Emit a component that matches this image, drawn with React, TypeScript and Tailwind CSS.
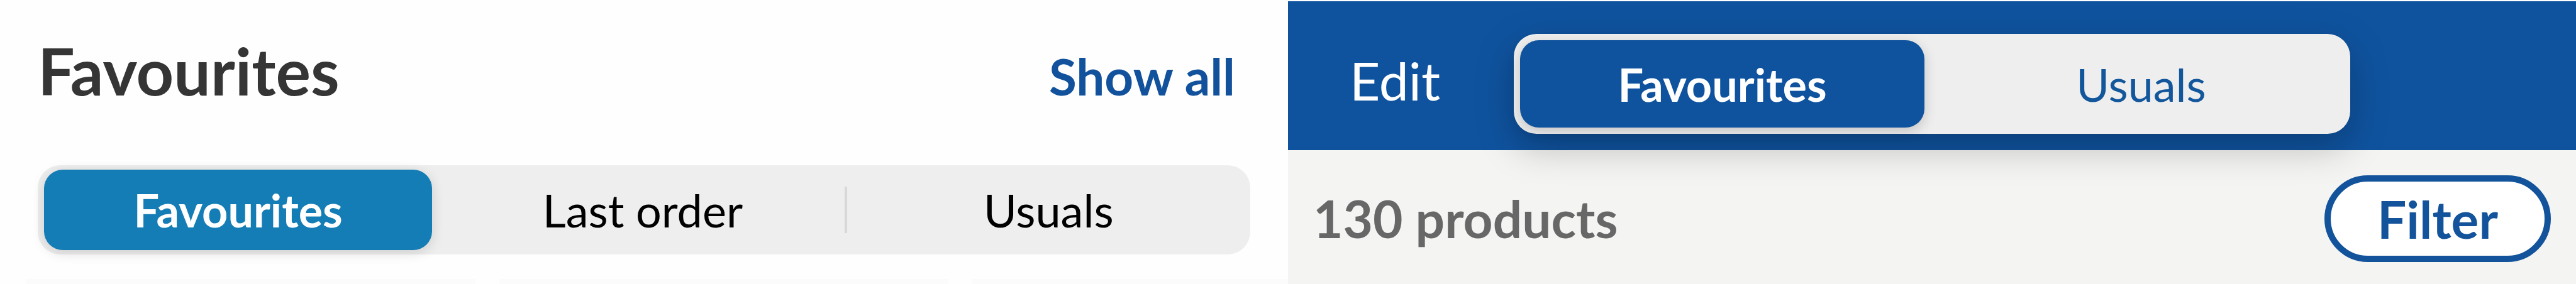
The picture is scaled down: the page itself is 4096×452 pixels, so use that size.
import type { ReactNode } from 'react';

type SegmentProps = {
  children: ReactNode;
  className: string;
  active?: boolean;
};

function Segment({ children, className, active = false }: SegmentProps) {
  return (
    <button
      type="button"
      aria-pressed={active}
      className={`min-w-0 flex-1 text-center text-[72px] leading-[88px] ${className}`}
    >
      {children}
    </button>
  );
}

function HomeFavourites() {
  return (
    <section className="flex flex-col overflow-hidden bg-[#fefefe]">
      <header className="flex items-baseline justify-between pt-[60px] pr-[84px] pl-[60px]">
        <h1 className="text-[104px] leading-[104px] font-bold text-[#343534]">Favourites</h1>
        <a href="#all" className="text-[80px] leading-[104px] font-bold text-[#12529c]">
          Show all
        </a>
      </header>

      <div
        role="group"
        aria-label="Product lists"
        className="mx-[60px] mt-[90px] grid h-[142px] grid-cols-[1fr_1fr_4px_1fr] items-stretch rounded-[36px] bg-[#eeeeee]"
      >
        <div className="flex py-[7px] pr-[14px] pl-[10px]">
          <Segment
            active
            className="rounded-[30px] bg-[#157db5] font-bold text-white shadow-[0_4px_20px_rgba(0,0,0,0.14)]"
          >
            Favourites
          </Segment>
        </div>
        <Segment className="text-black">Last order</Segment>
        <span className="h-[74px] self-center bg-[#d8d8d8]" />
        <Segment className="text-black">Usuals</Segment>
      </div>

      <div className="mt-[39px] flex min-h-[8px] flex-1 gap-[38px] pl-[42px]">
        <div className="w-[714px] shrink-0 bg-[#fbfbfb]" />
        <div className="w-[714px] shrink-0 bg-[#fbfbfb]" />
        <div className="w-[714px] shrink-0 bg-[#fbfbfb]" />
      </div>
    </section>
  );
}

function FavouritesList() {
  return (
    <section className="flex flex-col bg-[#f4f4f2] pt-[2px] shadow-[inset_0_2px_0_#ffffff]">
      <header className="relative grid grid-cols-[359px_1fr_359px] items-center bg-[#0f539f] pt-[52px] pb-[26px]">
        <div className="pb-[12px] pl-[98px]">
          <button type="button" className="text-[84px] leading-[100px] text-white">
            Edit
          </button>
        </div>
        <div
          role="group"
          aria-label="List type"
          className="grid h-[159px] grid-cols-2 items-stretch rounded-[36px] bg-[#eeeeee] shadow-[0_20px_60px_rgba(0,0,0,0.25)]"
        >
          <div className="flex py-[10px] pr-[12px] pl-[10px]">
            <Segment
              active
              className="rounded-[30px] bg-[#0f539f] font-bold text-white shadow-[0_6px_20px_rgba(0,0,0,0.18)]"
            >
              Favourites
            </Segment>
          </div>
          <Segment className="text-[#12569c]">Usuals</Segment>
        </div>
      </header>

      <div className="flex flex-1 items-start justify-between px-[40px] pt-[40px]">
        <p className="text-[82px] leading-[136px] font-bold text-[#676767]">130 products</p>
        <button
          type="button"
          className="rounded-full border-[10px] border-[#12539b] bg-white px-[74px] text-[82px] leading-[118px] font-bold text-[#12539b]"
        >
          Filter
        </button>
      </div>
    </section>
  );
}

export default function App() {
  return (
    <main className="grid min-h-screen grid-cols-2 font-[Lato,sans-serif]">
      <HomeFavourites />
      <FavouritesList />
    </main>
  );
}
